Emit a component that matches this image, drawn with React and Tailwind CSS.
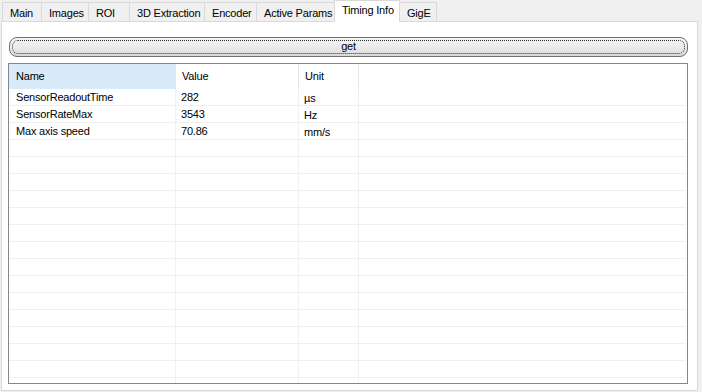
import React from "react";

const tabs = [
  { label: "Main", w: 40 },
  { label: "Images", w: 48 },
  { label: "ROI", w: 42 },
  { label: "3D Extraction", w: 76 },
  { label: "Encoder", w: 53 },
  { label: "Active Params", w: 79 },
  { label: "Timing Info", w: 66, active: true },
  { label: "GigE", w: 38 },
];

const rows = [
  ["SensorReadoutTime", "282", "µs"],
  ["SensorRateMax", "3543", "Hz"],
  ["Max axis speed", "70.86", "mm/s"],
];

const TabStrip = () => (
  <div className="flex items-end h-[21px] pl-[2px]">
    {tabs.map((t) =>
      t.active ? (
        <div
          key={t.label}
          style={{ width: t.w }}
          className="relative z-10 -mb-px h-[22px] bg-white border border-b-0 border-[#d9d9d9] pl-[7px] pt-[1px] -ml-px"
        >
          {t.label}
        </div>
      ) : (
        <div
          key={t.label}
          style={{ width: t.w }}
          className="h-[19px] bg-[#f0f0f0] border border-b-0 border-[#d9d9d9] pl-[7px] pt-[2px] -ml-px first:ml-0"
        >
          {t.label}
        </div>
      )
    )}
  </div>
);

const GetButton = () => (
  <button className="relative w-[679px] h-[20px] ml-[1px] rounded-[8px] border border-[#707070] bg-gradient-to-b from-[#f4f4f4] via-[#ebebeb] to-[#d8d8d8] flex items-center justify-center text-black">
    <span className="absolute inset-[2px] rounded-[6px] border border-dotted border-[#303030]" />
    <span className="relative -mt-px">get</span>
  </button>
);

const Grid = () => {
  const filler = Array.from({ length: 18 }, (_, i) => rows[i] || ["", "", ""]);
  return (
    <div className="w-[680px] h-[321px] border border-[#828790] bg-white overflow-hidden">
      <div className="flex h-[25px] items-center">
        <div className="w-[167px] h-full bg-[#d9ebf9] pl-[7px] flex items-center">Name</div>
        <div className="w-[123px] h-full border-r border-[#e5e5e5] pl-[6px] flex items-center">Value</div>
        <div className="w-[60px] h-full border-r border-[#e5e5e5] pl-[6px] flex items-center">Unit</div>
        <div className="flex-1" />
      </div>
      {filler.map((r, i) => (
        <div key={i} className="flex h-[17px] border-b border-[#f0f0f0] mr-px">
          <div className="w-[167px] border-r border-[#f0f0f0] pl-[7px] leading-[17px]">{r[0]}</div>
          <div className="w-[123px] border-r border-[#f0f0f0] pl-[5px] leading-[17px]">{r[1]}</div>
          <div className="w-[60px] border-r border-[#f0f0f0] pl-[5px] leading-[18px]">{r[2]}</div>
          <div className="flex-1" />
        </div>
      ))}
    </div>
  );
};

const App = () => {
  return (
    <div
      className="w-[702px] h-[392px] bg-[#f0f0f0] text-[11px] text-black tracking-[-0.2px] overflow-hidden"
      style={{ fontFamily: '"Liberation Sans", Arial, sans-serif' }}
    >
      <TabStrip />
      <div className="ml-[1px] w-[697px] h-[370px] bg-white border border-[#d9d9d9] pl-[6px] pt-[15px] flex flex-col gap-[6px]">
        <GetButton />
        <Grid />
      </div>
    </div>
  );
};

export default App;
